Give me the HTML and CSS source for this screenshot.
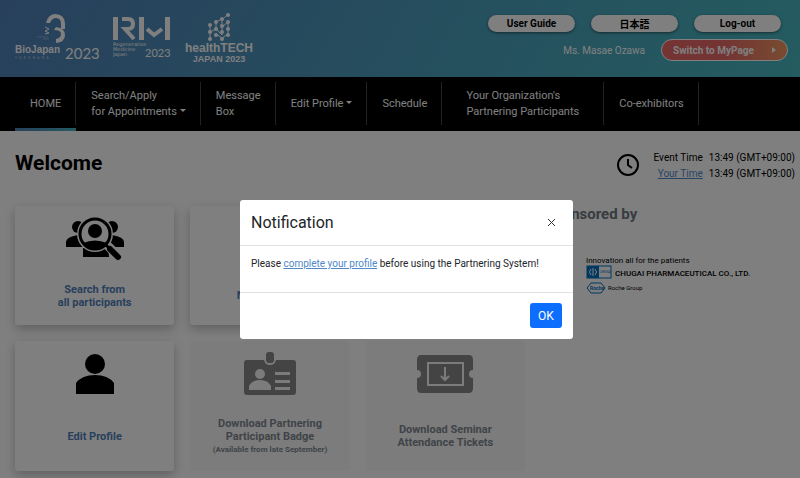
FILE: index.html
```html
<!DOCTYPE html>
<html lang="en">
<head>
  <meta charset="utf-8">
  <title>Partnering System</title>
  <link rel="stylesheet" href="styles.css">
</head>
<body>

  <header class="header">
    <div class="logos">
      <svg class="logo" width="84" height="50" viewBox="0 0 84 50" role="img" aria-label="BioJapan 2023">
        <path d="M31 11Q33 2 41 2Q50 3 50 12V17H46V12Q46 6 41 6Q37 6 35 11Z" fill="#fff"/>
        <path d="M41 15Q50 16 50 23Q50 30 41 31V27Q46 26 46 22Q46 18 39 18Z" fill="#fff"/>
        <path d="M30 15l4 2-4 2 4 2-4 1" fill="none" stroke="#fff"/>
        <path d="M22 25h11M28 27h6" stroke="#fff" stroke-opacity=".3"/>
        <text x="0" y="41" class="logo-bold" font-size="10">BioJapan</text>
        <text x="50" y="47" class="logo-light" font-size="15">2023</text>
        <text x="0" y="47" class="logo-light" font-size="3" fill-opacity=".7">Y&#160;&#160; O&#160;&#160; K&#160;&#160; O&#160;&#160; H&#160;&#160; A&#160;&#160; M&#160;&#160; A</text>
      </svg>
      <svg class="logo" width="58" height="50" viewBox="0 0 58 50" role="img" aria-label="Regenerative Medicine Japan 2023">
        <path d="M0 5h5v23H0zM26 5h5v23h-5zM52 5h5v23h-5z" fill="#fff"/>
        <path d="M9 7h6q5 0 5 5t-5 5h-3L21 27M34 17l7 6 8-6" fill="none" stroke="#fff" stroke-width="4"/>
        <text x="0" y="34" class="logo-text" font-size="5">Regenerative</text>
        <text x="0" y="39" class="logo-text" font-size="5">Medicine</text>
        <text x="0" y="44" class="logo-text" font-size="5">Japan</text>
        <text x="32" y="45" class="logo-light" font-size="11">2023</text>
      </svg>
      <svg class="logo" width="70" height="52" viewBox="0 0 70 52" role="img" aria-label="healthTECH Japan 2023">
        <path d="M25 13v14M25 20l6-3 6 6v-15l6-6M31 10v6M31 10l6-3M31 22l6 4M43 10v12l-6 4M37 15l6-5" fill="none" stroke="#fff"/>
        <g fill="#fff">
          <circle cx="25" cy="13" r="2"/><circle cx="25" cy="20" r="2"/><circle cx="25" cy="27" r="2"/>
          <circle cx="31" cy="10" r="2"/><circle cx="31" cy="17" r="2"/><circle cx="31" cy="23" r="2"/>
          <circle cx="37" cy="7" r="2"/><circle cx="37" cy="14" r="2"/><circle cx="37" cy="20" r="2"/><circle cx="37" cy="27" r="2"/>
          <circle cx="43" cy="3" r="2"/><circle cx="43" cy="10" r="2"/><circle cx="43" cy="17" r="2"/><circle cx="43" cy="23" r="2"/>
        </g>
        <text x="34" y="40" class="logo-bold" font-size="12" text-anchor="middle">healthTECH</text>
        <text x="34" y="50" class="logo-bold" font-size="9" text-anchor="middle">JAPAN 2023</text>
      </svg>
    </div>
    <div class="account">
      <div class="account-links">
        <button class="pill">User Guide</button>
        <button class="pill" lang="ja">日本語</button>
        <button class="pill">Log-out</button>
      </div>
      <div class="account-user">
        <span class="user-name">Ms. Masae Ozawa</span>
        <button class="switch">Switch to MyPage <span class="switch-arrow"></span></button>
      </div>
    </div>
  </header>

  <nav class="nav">
    <a class="nav-item active" href="#">HOME</a>
    <a class="nav-item" href="#"><span>Search/Apply<br>for Appointments<i class="caret"></i></span></a>
    <a class="nav-item" href="#">Message<br>Box</a>
    <a class="nav-item" href="#"><span>Edit Profile<i class="caret"></i></span></a>
    <a class="nav-item" href="#">Schedule</a>
    <a class="nav-item wide" href="#">Your Organization's<br>Partnering Participants</a>
    <a class="nav-item" href="#">Co-exhibitors</a>
  </nav>

  <main class="main">
    <div class="title-row">
      <h1 class="title">Welcome</h1>
      <div class="clock">
        <svg width="24" height="24" viewBox="0 0 24 24">
          <circle cx="12" cy="12" r="10" fill="none" stroke="#000" stroke-width="2"/>
          <path d="M12 6v6l4 3" fill="none" stroke="#000" stroke-width="2"/>
        </svg>
        <div class="times">
          <span>Event Time</span><span>13:49 (GMT+09:00)</span>
          <a class="link" href="#">Your Time</a><span>13:49 (GMT+09:00)</span>
        </div>
      </div>
    </div>

    <div class="content">
      <div class="cards">
        <a class="card" href="#">
          <span class="card-icon">
            <svg width="60" height="44" viewBox="0 0 60 44">
              <circle cx="13" cy="10" r="6"/><circle cx="47" cy="10" r="6"/>
              <path d="M1 30v-5q0-5 12-7l6 12zM59 30v-5q0-5-12-7l-6 12zM18 31h25l1 9H18z"/>
              <circle cx="30" cy="17" r="18" fill="#fff"/>
              <path d="M41 27l12 12" stroke="#fff" stroke-width="9" stroke-linecap="round"/>
              <circle cx="30" cy="17" r="15" fill="none" stroke="#000" stroke-width="3"/>
              <circle cx="30" cy="14" r="7"/>
              <path d="M18 26q12-5 24 0-5 6-12 6t-12-6z"/>
              <path d="M41 28l3 3" stroke="#000" stroke-width="3"/>
              <path d="M45 32l8 8" stroke="#000" stroke-width="6" stroke-linecap="round"/>
            </svg>
          </span>
          <span class="card-label">Search from<br>all participants</span>
        </a>
        <a class="card" href="#">
          <span class="card-icon"></span>
          <span class="card-label">Message Box</span>
        </a>
        <a class="card" href="#">
          <span class="card-icon"></span>
          <span class="card-label">Schedule</span>
        </a>
        <a class="card tall" href="#">
          <span class="card-icon">
            <svg width="40" height="42" viewBox="0 0 40 42">
              <circle cx="20" cy="11" r="10"/>
              <path d="M1 41V30q6-8 19-8t19 8v11z"/>
            </svg>
          </span>
          <span class="card-label">Edit Profile</span>
        </a>
        <div class="card tall disabled">
          <span class="card-icon">
            <svg width="52" height="46" viewBox="0 0 52 46">
              <path d="M3 9h17q1 5 6 5t6-5h17q3 0 3 3v29q0 3-3 3H3q-3 0-3-3V12q0-3 3-3z"/>
              <rect x="22" y="1" width="8" height="11" rx="3"/>
              <g fill="#f8f8f8">
                <circle cx="16" cy="23" r="5"/>
                <path d="M5 39v-4q3-6 11-6t11 6v4zM31 21h15v3H31zM31 29h15v3H31zM31 36h15v3H31z"/>
              </g>
            </svg>
          </span>
          <span class="card-label">Download Partnering<br>Participant Badge<small class="note">(Available from late September)</small></span>
        </div>
        <div class="card tall disabled">
          <span class="card-icon">
            <svg width="58" height="40" viewBox="0 0 58 40">
              <path d="M5 1h48q4 0 4 5v10q-4 0-4 4t4 4v10q0 5-4 5H5q-4 0-4-5V24q4 0 4-4t-4-4V6q0-5 4-5z"/>
              <rect x="12" y="9" width="35" height="22" fill="none" stroke="#f8f8f8" stroke-width="2"/>
              <path d="M29 13v13M25 22l4 4 4-4" fill="none" stroke="#f8f8f8" stroke-width="2"/>
            </svg>
          </span>
          <span class="card-label">Download Seminar<br>Attendance Tickets</span>
        </div>
      </div>

      <aside class="sponsor">
        <h2 class="sponsor-title">Sponsored by</h2>
        <svg class="sponsor-logo" width="174" height="40" viewBox="0 0 174 40" role="img" aria-label="Chugai Pharmaceutical">
          <text x="0" y="8" font-size="8">Innovation all for the patients</text>
          <rect x="1" y="11" width="24" height="12" fill="#fff" stroke="#0070c0"/>
          <rect x="1" y="11" width="12" height="12" fill="#0070c0"/>
          <path d="M7 13v8M5 14q-3 3 0 6M9 14q3 3 0 6" fill="none" stroke="#fff"/>
          <text x="14" y="18" font-size="3" fill="#0070c0">CHUGAI</text>
          <text x="29" y="21" class="sponsor-name" font-size="8">CHUGAI PHARMACEUTICAL CO., LTD.</text>
          <path d="M5 28h10l4 5-4 5H5l-4-5z" fill="none" stroke="#0070c0"/>
          <text x="4" y="35" font-size="5" font-weight="700" fill="#0070c0">Roche</text>
          <text x="22" y="35" font-size="6">Roche Group</text>
        </svg>
      </aside>
    </div>
  </main>

  <div class="backdrop">
    <div class="modal" role="dialog" aria-labelledby="modal-title">
      <div class="modal-header">
        <h2 class="modal-title" id="modal-title">Notification</h2>
        <button class="close" aria-label="Close">
          <svg width="7" height="7" viewBox="0 0 7 7"><path d="M0 0l7 7M7 0L0 7" stroke="#333"/></svg>
        </button>
      </div>
      <div class="modal-body">Please <a class="link" href="#">complete your profile</a> before using the Partnering System!</div>
      <div class="modal-footer">
        <button class="ok">OK</button>
      </div>
    </div>
  </div>

</body>
</html>
```

FILE: styles.css
```css
* {
  box-sizing: border-box;
}

body {
  margin: 0;
  height: 100vh;
  overflow: hidden;
  background: #fff;
  color: #000;
  font-family: Roboto, "Noto Sans CJK JP", sans-serif;
  font-size: 10px;
}

button {
  font-family: inherit;
  cursor: pointer;
}

.link {
  color: #5088c8;
}

/* header */
.header {
  display: flex;
  justify-content: space-between;
  height: 77px;
  padding: 12px 12px 0 15px;
  background: linear-gradient(120deg, #5080b8, #48b8c0);
}

.logos {
  display: flex;
  gap: 14px;
}

.logo text {
  fill: #fff;
}

.logo-bold {
  font-family: "Liberation Sans", sans-serif;
  font-weight: 700;
}

.logo-light {
  font-family: Lato, sans-serif;
}

.logo-text {
  font-family: "DejaVu Sans", sans-serif;
}

.account-links {
  display: flex;
  gap: 16px;
  padding: 3px 7px 0 0;
}

.pill {
  width: 87px;
  height: 17px;
  padding: 0;
  border: 0;
  border-radius: 9px;
  background: #fff;
  box-shadow: 0 1px 3px rgba(0, 0, 0, .5);
  color: #000;
  font-size: 10px;
  font-weight: 700;
}

.account-user {
  display: flex;
  align-items: center;
  justify-content: flex-end;
  gap: 16px;
  margin-top: 7px;
}

.user-name {
  color: #fff;
}

.switch {
  display: flex;
  align-items: center;
  justify-content: space-between;
  width: 127px;
  height: 22px;
  padding: 0 11px;
  border: 1px solid #fff;
  border-radius: 11px;
  background: linear-gradient(90deg, #e86868 50%, #f09860);
  color: #fff;
  font-size: 10px;
  font-weight: 700;
}

.switch-arrow {
  border: 3px solid transparent;
  border-left: 4px solid #fff;
  border-right: 0;
}

/* nav */
.nav {
  display: flex;
  height: 54px;
  padding: 5px 15px 0;
  background: #000;
}

.nav-item {
  display: flex;
  align-items: center;
  height: 43px;
  padding: 0 14px 0 15px;
  border-right: 1px solid #444;
  color: #fff;
  font-size: 11px;
  line-height: 16px;
  text-decoration: none;
}

.nav-item.active {
  position: relative;
}

.nav-item.active::after {
  content: "";
  position: absolute;
  left: 0;
  right: -1px;
  bottom: -6px;
  height: 3px;
  background: linear-gradient(90deg, #5080b8, #48b8c0);
}

.nav-item.wide {
  padding: 0 24px;
}

.caret {
  display: inline-block;
  margin-left: 3px;
  border: 3px solid transparent;
  border-top-color: #fff;
  border-bottom: 0;
  vertical-align: 3px;
}

/* page */
.title-row {
  display: flex;
  align-items: center;
  justify-content: space-between;
  height: 75px;
  padding: 0 5px 12px 15px;
}

.title {
  margin: 0;
  font-size: 21px;
}

.clock {
  display: flex;
  align-items: center;
  gap: 14px;
  padding-top: 4px;
}

.times {
  display: grid;
  grid-template-columns: auto auto;
  column-gap: 6px;
  padding-top: 3px;
  line-height: 16px;
  text-align: right;
}

.content {
  display: grid;
  grid-template-columns: 2fr 1fr;
  gap: 20px;
  padding-left: 15px;
}

.cards {
  display: grid;
  grid-template-columns: 1fr 1fr 1fr;
  gap: 16px;
}

.card {
  display: flex;
  flex-direction: column;
  min-height: 119px;
  padding-bottom: 8px;
  border-radius: 3px;
  background: #fff;
  box-shadow: 0 4px 11px rgba(0, 0, 0, .25);
  color: #5080b8;
  font-size: 11px;
  font-weight: 700;
  line-height: 13px;
  text-align: center;
  text-decoration: none;
}

.card.tall {
  min-height: 130px;
}

.card.disabled {
  background: #f8f8f8;
  box-shadow: none;
  color: #808890;
  fill: #888;
}

.card-icon {
  display: flex;
  align-items: center;
  justify-content: center;
  height: 68px;
  padding-bottom: 2px;
}

.card-label {
  display: flex;
  flex: 1;
  flex-direction: column;
  justify-content: center;
}

.note {
  display: block;
  font-size: 8px;
}

.sponsor {
  text-align: center;
}

.sponsor-title {
  margin: 0 0 32px;
  color: #707880;
  font-size: 15px;
  line-height: 17px;
  text-align: left;
}

.sponsor-name {
  font-weight: 500;
}

/* dialog */
.backdrop {
  position: fixed;
  inset: 0;
  display: flex;
  align-items: flex-start;
  justify-content: center;
  padding: 200px 0 0 13px;
  background: rgba(0, 0, 0, .5);
}

.modal {
  width: 333px;
  border-radius: 3px;
  background: #fff;
  color: #212529;
}

.modal-header {
  display: flex;
  align-items: center;
  justify-content: space-between;
  padding: 11px;
  border-bottom: 1px solid #dee2e6;
}

.modal-title {
  margin: 0;
  font-size: 16px;
  font-weight: 400;
  line-height: 23px;
}

.close {
  display: flex;
  padding: 7px;
  border: 0;
  background: none;
}

.modal-body {
  padding: 10px 11px 20px;
  line-height: 16px;
}

.modal-footer {
  display: flex;
  justify-content: flex-end;
  padding: 10px 11px 11px;
  border-top: 1px solid #dee2e6;
}

.ok {
  width: 32px;
  height: 25px;
  padding: 0;
  border: 0;
  border-radius: 3px;
  background: #0d6efd;
  color: #fff;
  font-size: 12px;
}
```
